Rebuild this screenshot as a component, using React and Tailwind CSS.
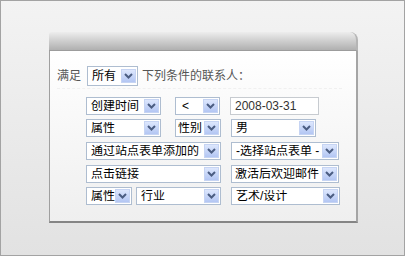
import React from "react";

const FONT = { fontFamily: '"Liberation Sans", "Noto Sans CJK SC", sans-serif' };

function Arrow({ h = "h-[14px]" }) {
  return (
    <span
      className={`flex-none w-[15px] ${h} mr-[1px] flex items-center justify-center bg-linear-to-b from-[#dde7fd] to-[#b3c6f3] border border-[#c6d4f3]`}
    >
      <svg width="9" height="6" viewBox="0 0 9 6">
        <path d="M1 1 L4.5 4.5 L8 1" stroke="#4b5d82" strokeWidth="2" fill="none" />
      </svg>
    </span>
  );
}

function Select({ w, text, h = "h-[18px]", pad = "pl-[4px]" }) {
  return (
    <div
      className={`${w} ${h} flex-none flex items-center border border-[#aebdd0] bg-white overflow-hidden`}
    >
      <span className={`flex-1 ${pad} whitespace-nowrap overflow-hidden text-[12px] leading-none text-black`}>
        {text}
      </span>
      <Arrow />
    </div>
  );
}

export default function App() {
  return (
    <div
      className="w-[405px] h-[256px] border border-[#a3a3a3] bg-linear-to-b from-[#f3f3f3] to-[#e2e2e2] pl-[48px] pt-[31px]"
      style={FONT}
    >
      <div className="w-[309px]">
        <div className="h-[19px] rounded-tl-[3px] rounded-tr-[8px] bg-linear-to-b from-[#ededed] to-[#b0b0b0] border-b border-[#9c9c9c] border-r-2 border-r-[#b5b5b5]" />
        <div className="h-[172px] bg-linear-to-b from-white to-[#efefef] border-l border-l-[#9f9f9f] border-r-2 border-r-[#a5a5a5] border-b-2 border-b-[#858585] pl-[7px] pt-[15px]">
          <div className="flex items-center h-[20px] pb-0">
            <span className="text-[12px] text-[#555]">满足</span>
            <div className="ml-[6px] w-[51px] h-[20px] flex items-center border border-[#aebdd0] bg-white">
              <span className="flex-1 pl-[4px] text-[12px] leading-none text-black">所有</span>
              <Arrow />
            </div>
            <span className="ml-[4px] text-[12px] text-[#555]">下列条件的联系人：</span>
          </div>
          <div className="mt-[2px] mr-[14px] border-b border-dashed border-[#f0f0f0]" />
          <div className="ml-[29px] mt-[8px] flex flex-col">
            <div className="flex items-center h-[18px]">
              <Select w="w-[75px]" text="创建时间" />
              <div className="ml-[14px]">
                <Select w="w-[45px]" text="<" pad="pl-[6px]" />
              </div>
              <div className="ml-[10px] w-[89px] h-[18px] border border-[#c7cbd0] bg-white flex items-center pl-[4px] text-[12px] text-[#333] leading-none">
                2008-03-31
              </div>
            </div>
            <div className="flex items-center h-[18px] mt-[4px]">
              <Select w="w-[75px]" text="属性" />
              <div className="ml-[14px]">
                <Select w="w-[46px]" text="性别" pad="pl-[2px]" />
              </div>
              <div className="ml-[10px]">
                <Select w="w-[85px]" text="男" />
              </div>
            </div>
            <div className="flex items-center h-[18px] mt-[5px]">
              <Select w="w-[135px]" text="通过站点表单添加的" />
              <div className="ml-[10px]">
                <Select w="w-[108px]" text="-选择站点表单 -" />
              </div>
            </div>
            <div className="flex items-center h-[18px] mt-[5px]">
              <Select w="w-[135px]" text="点击链接" />
              <div className="ml-[10px]">
                <Select w="w-[108px]" text="激活后欢迎邮件" pad="pl-[3px]" />
              </div>
            </div>
            <div className="flex items-center h-[18px] mt-[4px]">
              <Select w="w-[46px]" text="属性" />
              <div className="ml-[4px]">
                <Select w="w-[85px]" text="行业" />
              </div>
              <div className="ml-[10px]">
                <Select w="w-[109px]" text="艺术/设计" />
              </div>
            </div>
          </div>
        </div>
      </div>
    </div>
  );
}
